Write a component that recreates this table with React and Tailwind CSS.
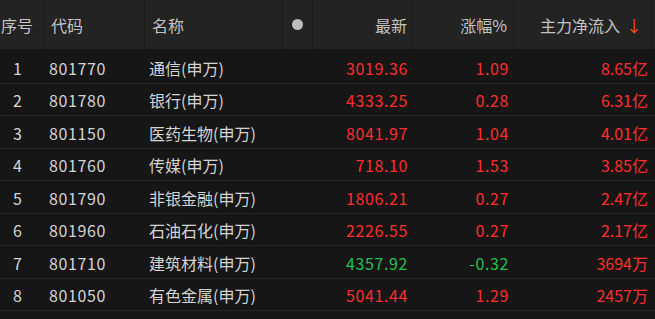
const rows = [
  { no: 1, code: "801770", name: "通信(申万)", last: "3019.36", pct: "1.09", flow: "8.65亿", up: true },
  { no: 2, code: "801780", name: "银行(申万)", last: "4333.25", pct: "0.28", flow: "6.31亿", up: true },
  { no: 3, code: "801150", name: "医药生物(申万)", last: "8041.97", pct: "1.04", flow: "4.01亿", up: true },
  { no: 4, code: "801760", name: "传媒(申万)", last: "718.10", pct: "1.53", flow: "3.85亿", up: true },
  { no: 5, code: "801790", name: "非银金融(申万)", last: "1806.21", pct: "0.27", flow: "2.47亿", up: true },
  { no: 6, code: "801960", name: "石油石化(申万)", last: "2226.55", pct: "0.27", flow: "2.17亿", up: true },
  { no: 7, code: "801710", name: "建筑材料(申万)", last: "4357.92", pct: "-0.32", flow: "3694万", up: false },
  { no: 8, code: "801050", name: "有色金属(申万)", last: "5041.44", pct: "1.29", flow: "2457万", up: true },
];

export default function App() {
  return (
    <div
      className="w-[655px] h-[319px] overflow-hidden bg-[#161616] text-[16px] text-[#d4d4d4]"
      style={{ fontFamily: "'Noto Sans CJK SC', 'Noto Sans', sans-serif" }}
    >
      {/* header */}
      <div className="flex h-[51px] bg-[#232323] text-[#c4c4c4] border-b-2 border-[#161616]">
        <div className="w-[45px] flex items-center pl-[1px] border-r border-[#191919]">序号</div>
        <div className="w-[100px] flex items-center pl-[6px] border-r border-[#191919]">代码</div>
        <div className="w-[138px] flex items-center pl-[7px] border-r border-[#191919]">名称</div>
        <div className="w-[30px] flex items-center justify-center border-r border-[#191919]">
          <span className="w-[11px] h-[11px] rounded-full bg-[#bdbdbd]" />
        </div>
        <div className="w-[100px] flex items-center justify-end pr-[5px] border-r border-[#191919]">最新</div>
        <div className="w-[101px] flex items-center justify-end pr-[6px] border-r border-[#191919]">涨幅%</div>
        <div className="w-[138px] flex items-center justify-end pr-[9px] gap-[6px] border-r border-[#191919]">
          主力净流入
          <span className="text-[#ff4a24] text-[16px] leading-none">↓</span>
        </div>
        <div className="flex-1" />
      </div>
      {/* rows */}
      {rows.map((r) => {
        const c = r.up ? "text-[#ff2d2d]" : "text-[#22c151]";
        return (
          <div key={r.no} className="flex h-[32.5px] items-center pt-[2px] border-b border-[#262626] tracking-[0.6px]">
            <div className="w-[45px] pl-[13px]">{r.no}</div>
            <div className="w-[100px] pl-[4px]">{r.code}</div>
            <div className="w-[138px] pl-[4px] tracking-normal">{r.name}</div>
            <div className="w-[30px]" />
            <div className={`w-[100px] text-right pr-[5px] ${c}`}>{r.last}</div>
            <div className={`w-[101px] text-right pr-[5px] ${c}`}>{r.pct}</div>
            <div className={`w-[138px] text-right pr-[4px] tracking-normal text-[#ff2d2d]`}>{r.flow}</div>
          </div>
        );
      })}
    </div>
  );
}
